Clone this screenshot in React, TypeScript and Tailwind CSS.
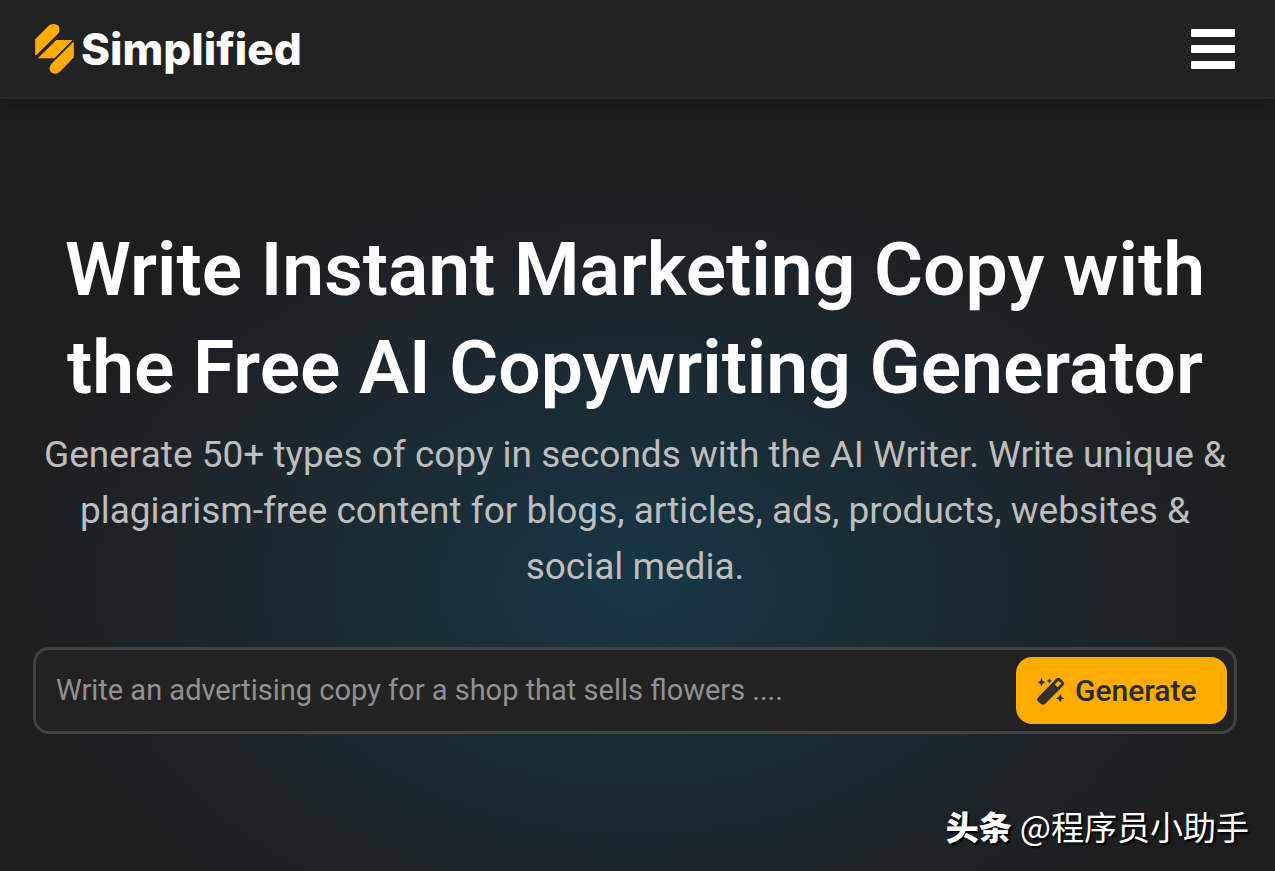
import React, { useState } from 'react';

const LogoMark: React.FC = () => (
  <svg viewBox="45 42 116 150" className="h-[50px] w-[39px] shrink-0" fill="#ffac00" aria-hidden="true">
    <path d="M45 88 L84 49 Q91 42 100 42 Q118 43 118 59 Q118 67 112 73 L49 135 Q45 138 45 132 Z" />
    <path d="M108 90 H157 L103 145 H53 Z" />
    <path d="M161 98 V142 L121 184 Q113 192 104 191 Q88 189 88 175 Q88 168 94 161 L157 98 Q161 94 161 98 Z" />
  </svg>
);

const WandIcon: React.FC = () => (
  <svg viewBox="0 0 28 28" className="h-7 w-7 shrink-0" fill="#33302b" aria-hidden="true">
    <path
      fillRule="evenodd"
      d="M.9 20.4 L19.4 1.6 Q21.4 0 23.3 1.6 L26.4 4.7 Q28 6.6 26.4 8.6 L8 27 Q6 28.6 4 27 L.9 24.2 Q-.7 22.3 .9 20.4 Z M17.8 7.4 L20.8 10.2 L24.4 6.6 L21.5 3.8 Z"
    />
    <path d="M4.5 1 L5.8 3.9 L8.7 5.2 L5.8 6.5 L4.5 9.4 L3.2 6.5 L.3 5.2 L3.2 3.9 Z" />
    <path d="M12.3 1.2 L13.2 2.9 L14.9 3.8 L13.2 4.7 L12.3 6.4 L11.4 4.7 L9.7 3.8 L11.4 2.9 Z" />
    <path d="M23.2 17 L24.5 19.9 L27.4 21.2 L24.5 22.5 L23.2 25.4 L21.9 22.5 L19 21.2 L21.9 19.9 Z" />
  </svg>
);

const App: React.FC = () => {
  const [prompt, setPrompt] = useState('');

  return (
    <div className="flex min-h-screen flex-col bg-[#1e1e1e] font-[Roboto,'Noto_Sans_CJK_SC',sans-serif] text-white">
      <header className="z-10 flex items-center justify-between border-b-2 border-[#282828] bg-[#222222] pt-6 pr-10 pb-[23px] pl-[35px] shadow-[0_4px_16px_rgba(0,0,0,0.25)]">
        <a href="#" className="flex items-center gap-[7px]">
          <LogoMark />
          <span className="text-[44px] leading-[48px] font-extrabold font-[Inter,sans-serif]">Simplified</span>
        </a>
        <button type="button" aria-label="Open menu" className="flex w-11 flex-col gap-2">
          <span className="h-2 w-full rounded-[1px] bg-white" />
          <span className="h-2 w-full rounded-[1px] bg-white" />
          <span className="h-2 w-full rounded-[1px] bg-white" />
        </button>
      </header>

      <main className="flex grow flex-col bg-[radial-gradient(ellipse_49%_54%_at_50%_63%,#173747_0%,#1a2d36_38%,#1d2429_78%,#1e1e1e_100%)] pt-[121px]">
        <div className="pr-[38px] pl-[33px]">
          <h1 className="text-center text-[75px] leading-[98px] font-semibold">
            Write Instant Marketing Copy with the Free AI Copywriting Generator
          </h1>
          <p className="mt-[11px] text-center text-[37px] leading-[56px] text-[#bdbdbd]">
            Generate 50+ types of copy in seconds with the AI Writer. Write unique &amp; plagiarism-free content for
            blogs, articles, ads, products, websites &amp; social media.
          </p>

          <form
            className="mt-13 flex items-center rounded-2xl border-3 border-[#414141] bg-[#222222] py-[7px] pr-[7px] pl-5"
            onSubmit={e => e.preventDefault()}
          >
            <input
              type="text"
              aria-label="Describe your copy"
              className="min-w-0 grow bg-transparent text-[29px] text-white outline-none placeholder:text-[#919191]"
              placeholder="Write an advertising copy for a shop that sells flowers ...."
              value={prompt}
              onChange={e => setPrompt(e.target.value)}
            />
            <button
              type="submit"
              className="flex h-[67px] w-[211px] shrink-0 items-center gap-[10px] rounded-2xl bg-[#ffac00] pl-[21px] text-[30px] font-medium text-[#2b2b2b]"
            >
              <WandIcon />
              Generate
            </button>
          </form>
        </div>

        <div className="mt-auto flex items-center justify-end gap-2 pr-[26px] pb-[23px] text-[33px] leading-[44px] [text-shadow:2px_2px_2px_#000]">
          <span className="font-black font-['Noto_Sans_CJK_SC',sans-serif]">头条</span>
          <span className="font-['Noto_Sans_CJK_SC',sans-serif]">@程序员小助手</span>
        </div>
      </main>
    </div>
  );
};

export default App;
